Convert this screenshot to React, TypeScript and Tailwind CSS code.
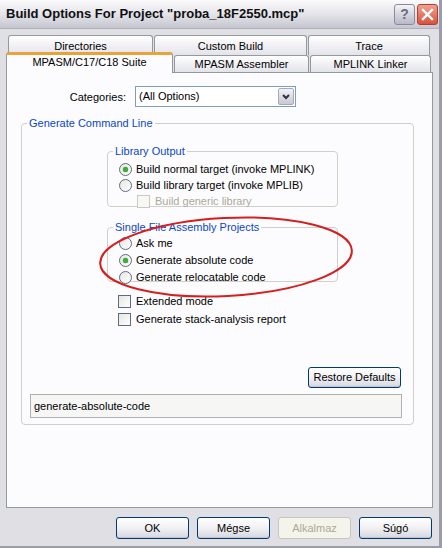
import type { ReactNode } from "react";

const FONT = "font-['Liberation_Sans',Arial,sans-serif]";

function Radio({ checked = false, label, h = "h-[16px]" }: { checked?: boolean; label: string; h?: string }) {
  return (
    <div className={`flex items-center ${h}`}>
      <span className="w-[13px] h-[13px] rounded-full border border-[#5d6b82] bg-gradient-to-br from-[#e6e6e0] to-white flex items-center justify-center">
        {checked && <span className="w-[5px] h-[5px] rounded-full bg-[#3dae36] shadow-[0_0_1px_#1f7d1a]" />}
      </span>
      <span className="ml-[4px]">{label}</span>
    </div>
  );
}

function Check({ label, disabled = false }: { label: string; disabled?: boolean }) {
  return (
    <div className="flex items-center h-[16px]">
      <span
        className={`w-[13px] h-[13px] border ${
          disabled ? "border-[#c9c7c0] bg-[#f7f7f4]" : "border-[#5d6b82] bg-gradient-to-br from-[#e6e6e0] to-white"
        }`}
      />
      <span className={`ml-[5px] ${disabled ? "text-[#aca899]" : ""}`}>{label}</span>
    </div>
  );
}

function Group({ title, className, children }: { title: string; className?: string; children: ReactNode }) {
  return (
    <fieldset className={`border border-[#d0d0c8] rounded-[4px] p-0 ${className ?? ""}`}>
      <legend className="ml-[5px] px-[2px] text-[#0b46c8] leading-[13px]">{title}</legend>
      {children}
    </fieldset>
  );
}

function XpButton({ children, disabled = false, className }: { children: ReactNode; disabled?: boolean; className?: string }) {
  return (
    <button
      className={`rounded-[3px] border ${
        disabled
          ? "border-[#c9c7ba] bg-[#f5f4ea] text-[#aca899]"
          : "border-[#003c74] bg-gradient-to-b from-white via-[#f1f1f4] to-[#d6d6e0] text-black shadow-[inset_0_-1px_0_#c3c3d0]"
      } ${className ?? ""}`}
    >
      {children}
    </button>
  );
}

function Tab({ label, w, active = false }: { label: string; w: string; active?: boolean }) {
  if (active) {
    return (
      <div className={`${w} h-[21px] -mb-px z-10 flex justify-center rounded-t-[3px] border border-b-0 border-[#919b9c] border-t-[3px] border-t-[#e8a23a] bg-[#fcfcfe]`}>
        <span className="leading-[14px]">{label}</span>
      </div>
    );
  }
  return (
    <div className={`${w} h-[17px] flex items-center justify-center rounded-t-[3px] border border-b-0 border-[#919b9c] bg-gradient-to-b from-white to-[#e3e3ea]`}>
      {label}
    </div>
  );
}

export default function App() {
  return (
    <div className={`${FONT} relative w-[442px] h-[548px] bg-[#e0dfe3] text-[11px] text-black overflow-hidden border-r-[3px] border-b-[2px] border-[#9c9ca8]`}>
      {/* title bar */}
      <div className="h-[29px] flex items-center pl-[6px] pr-[1px] bg-gradient-to-b from-[#fbfbfc] via-[#e4e4ea] to-[#c6c6d0] border-b border-[#b0b0bc]">
        <span className="font-bold text-[13px] text-[#101010]">Build Options For Project "proba_18F2550.mcp"</span>
        <div className="ml-auto flex gap-[2px]">
          <div className="w-[21px] h-[21px] rounded-[3px] border border-[#8a8a98] bg-gradient-to-b from-[#f4f4f8] to-[#b8b8c8] flex items-center justify-center text-[#6a6a80] font-bold text-[14px]">
            ?
          </div>
          <div className="w-[21px] h-[21px] rounded-[3px] border border-[#b04030] bg-gradient-to-b from-[#f0a090] to-[#d8503a] flex items-center justify-center">
            <svg width="13" height="13" viewBox="0 0 13 13">
              <path d="M2 2 L11 11 M11 2 L2 11" stroke="white" strokeWidth="2.4" strokeLinecap="square" />
            </svg>
          </div>
        </div>
      </div>

      {/* tabs */}
      <div className="pt-[6px] px-[6px]">
        <div className="flex gap-[1px] pl-[2px] h-[18px]">
          <div className="w-[145px] h-[20px] pt-[3px] text-center leading-[14px] rounded-t-[3px] border border-b-0 border-[#919b9c] bg-gradient-to-b from-white to-[#e3e3ea]">Directories</div>
          <div className="w-[153px] h-[20px] pt-[3px] text-center leading-[14px] rounded-t-[3px] border border-b-0 border-[#919b9c] bg-gradient-to-b from-white to-[#e3e3ea]">Custom Build</div>
          <div className="w-[122px] h-[20px] pt-[3px] text-center leading-[14px] rounded-t-[3px] border border-b-0 border-[#919b9c] bg-gradient-to-b from-white to-[#e3e3ea]">Trace</div>
        </div>
        <div className="relative flex gap-[1px] items-end h-[19px]">
          <Tab label="MPASM/C17/C18 Suite" w="w-[167px]" active />
          <Tab label="MPASM Assembler" w="w-[135px]" />
          <Tab label="MPLINK Linker" w="w-[121px]" />
        </div>

        {/* tab page */}
        <div className="w-[427px] h-[436px] border border-[#919b9c] bg-[#fcfcfe] pt-[13px] px-[14px]">
          <div className="flex items-center">
            <span className="w-[114px] text-right pr-[9px] pt-[2px]">Categories:</span>
            <div className="w-[161px] h-[21px] border border-[#7f9db9] bg-white flex items-center">
              <span className="pl-[3px] flex-1">(All Options)</span>
              <div className="w-[16px] h-[17px] mr-[1px] rounded-[2px] bg-gradient-to-b from-[#f2f2f6] to-[#c8c8d4] border border-[#a8a8b8] flex items-center justify-center">
                <svg width="8" height="6" viewBox="0 0 8 6">
                  <path d="M1 1 L4 4 L7 1" stroke="#303040" strokeWidth="2" fill="none" />
                </svg>
              </div>
            </div>
          </div>

          <Group title="Generate Command Line" className="mt-[10px] w-[393px] pb-[6px]">
            <div className="pl-[85px]">
              <Group title="Library Output" className="mt-[15px] w-[231px] h-[62px]">
                <div className="pl-[11px] pt-[3px]">
                  <Radio checked label="Build normal target (invoke MPLINK)" />
                  <Radio label="Build library target (invoke MPLIB)" />
                  <div className="pl-[18px]">
                    <Check disabled label="Build generic library" />
                  </div>
                </div>
              </Group>
              <Group title="Single File Assembly Projects" className="mt-[14px] w-[231px] h-[61px]">
                <div className="pl-[11px] pt-[1px]">
                  <Radio h="h-[17px]" label="Ask me" />
                  <Radio h="h-[17px]" checked label="Generate absolute code" />
                  <Radio h="h-[17px]" label="Generate relocatable code" />
                </div>
              </Group>
              <div className="pl-[11px] pt-[11px] flex flex-col gap-[2px]">
                <Check label="Extended mode" />
                <Check label="Generate stack-analysis report" />
              </div>
            </div>
            <div className="flex justify-end pr-[12px] mt-[40px]">
              <XpButton className="w-[93px] h-[21px]">Restore Defaults</XpButton>
            </div>
            <div className="ml-[8px] mt-[6px] w-[372px] h-[24px] border border-[#b0b0b0] bg-[#f6f6f4] flex items-center pl-[3px]">
              generate-absolute-code
            </div>
          </Group>
        </div>
      </div>

      {/* dialog buttons */}
      <div className="flex justify-end gap-[8px] pr-[7px] pt-[9px]">
        <XpButton className="w-[73px] h-[22px]">OK</XpButton>
        <XpButton className="w-[73px] h-[22px]">Mégse</XpButton>
        <XpButton disabled className="w-[73px] h-[22px]">Alkalmaz</XpButton>
        <XpButton className="w-[73px] h-[22px]">Súgó</XpButton>
      </div>

      {/* red marker ring */}
      <svg className="absolute left-0 top-0 pointer-events-none" width="442" height="548" viewBox="0 0 442 548">
        <ellipse cx="226" cy="257" rx="126" ry="39" transform="rotate(-3 226 257)" fill="none" stroke="#d51f1f" strokeWidth="2" />
      </svg>
    </div>
  );
}
